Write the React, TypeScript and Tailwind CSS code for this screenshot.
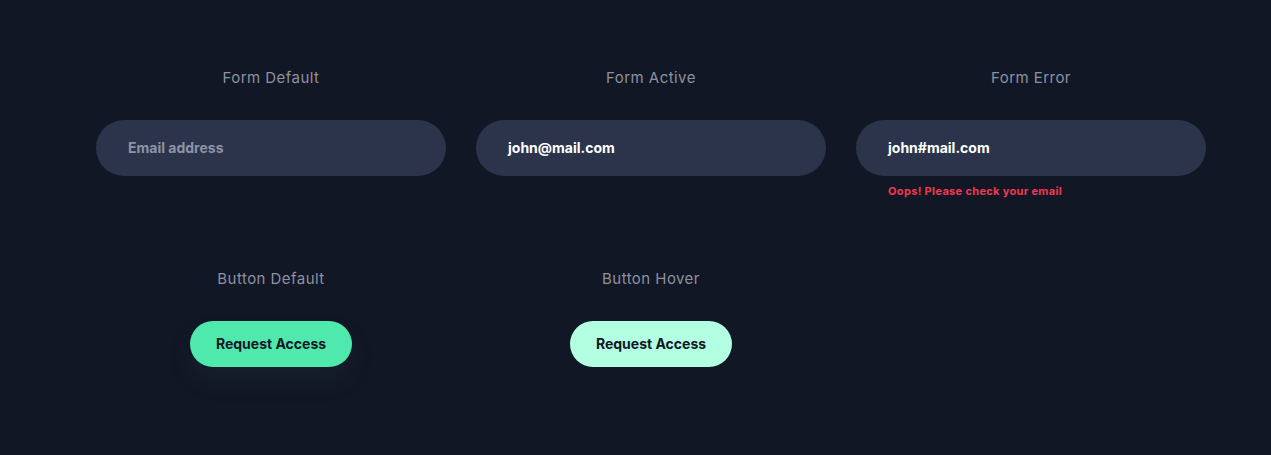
import React from 'react';

const font = { fontFamily: 'Inter, "Liberation Sans", sans-serif' };

const Label: React.FC<{ children: React.ReactNode }> = ({ children }) => (
    <p className="text-[15px] leading-5 text-[#8d91a0] text-center tracking-[0.03em]">{children}</p>
);

const Field: React.FC<{ value: string; placeholder?: boolean }> = ({ value, placeholder }) => (
    <div
        className={`mt-8 h-14 w-[350px] rounded-full bg-[#2c344b] flex items-center pl-8 text-sm font-bold ${
            placeholder ? 'text-[#8d93a6]' : 'text-white'
        }`}
    >
        {value}
    </div>
);

export default function App() {
    return (
        <div className="min-h-[455px] w-full bg-[#121725] pl-[96px] pt-[68px]" style={font}>
            {/* Forms */}
            <div className="flex gap-[30px] items-start">
                <div className="w-[350px]">
                    <Label>Form Default</Label>
                    <Field value="Email address" placeholder />
                </div>
                <div className="w-[350px]">
                    <Label>Form Active</Label>
                    <Field value="john@mail.com" />
                </div>
                <div className="w-[350px]">
                    <Label>Form Error</Label>
                    <Field value="john#mail.com" />
                    <p className="mt-[8px] pl-8 text-[11px] leading-[14px] font-bold tracking-[0.03em] text-[#f0394f]">
                        Oops! Please check your email
                    </p>
                </div>
            </div>

            {/* Buttons */}
            <div className="flex gap-[30px] mt-[71px]">
                <div className="w-[350px] flex flex-col items-center">
                    <Label>Button Default</Label>
                    <button className="mt-8 h-[46px] w-[162px] rounded-full bg-[#4fe9ad] text-sm font-bold text-[#121725] shadow-[0_14px_20px_rgba(30,45,60,0.3)]">
                        Request Access
                    </button>
                </div>
                <div className="w-[350px] flex flex-col items-center">
                    <Label>Button Hover</Label>
                    <button className="mt-8 h-[46px] w-[162px] rounded-full bg-[#b3ffe1] text-sm font-bold text-[#121725]">
                        Request Access
                    </button>
                </div>
            </div>
        </div>
    );
}
